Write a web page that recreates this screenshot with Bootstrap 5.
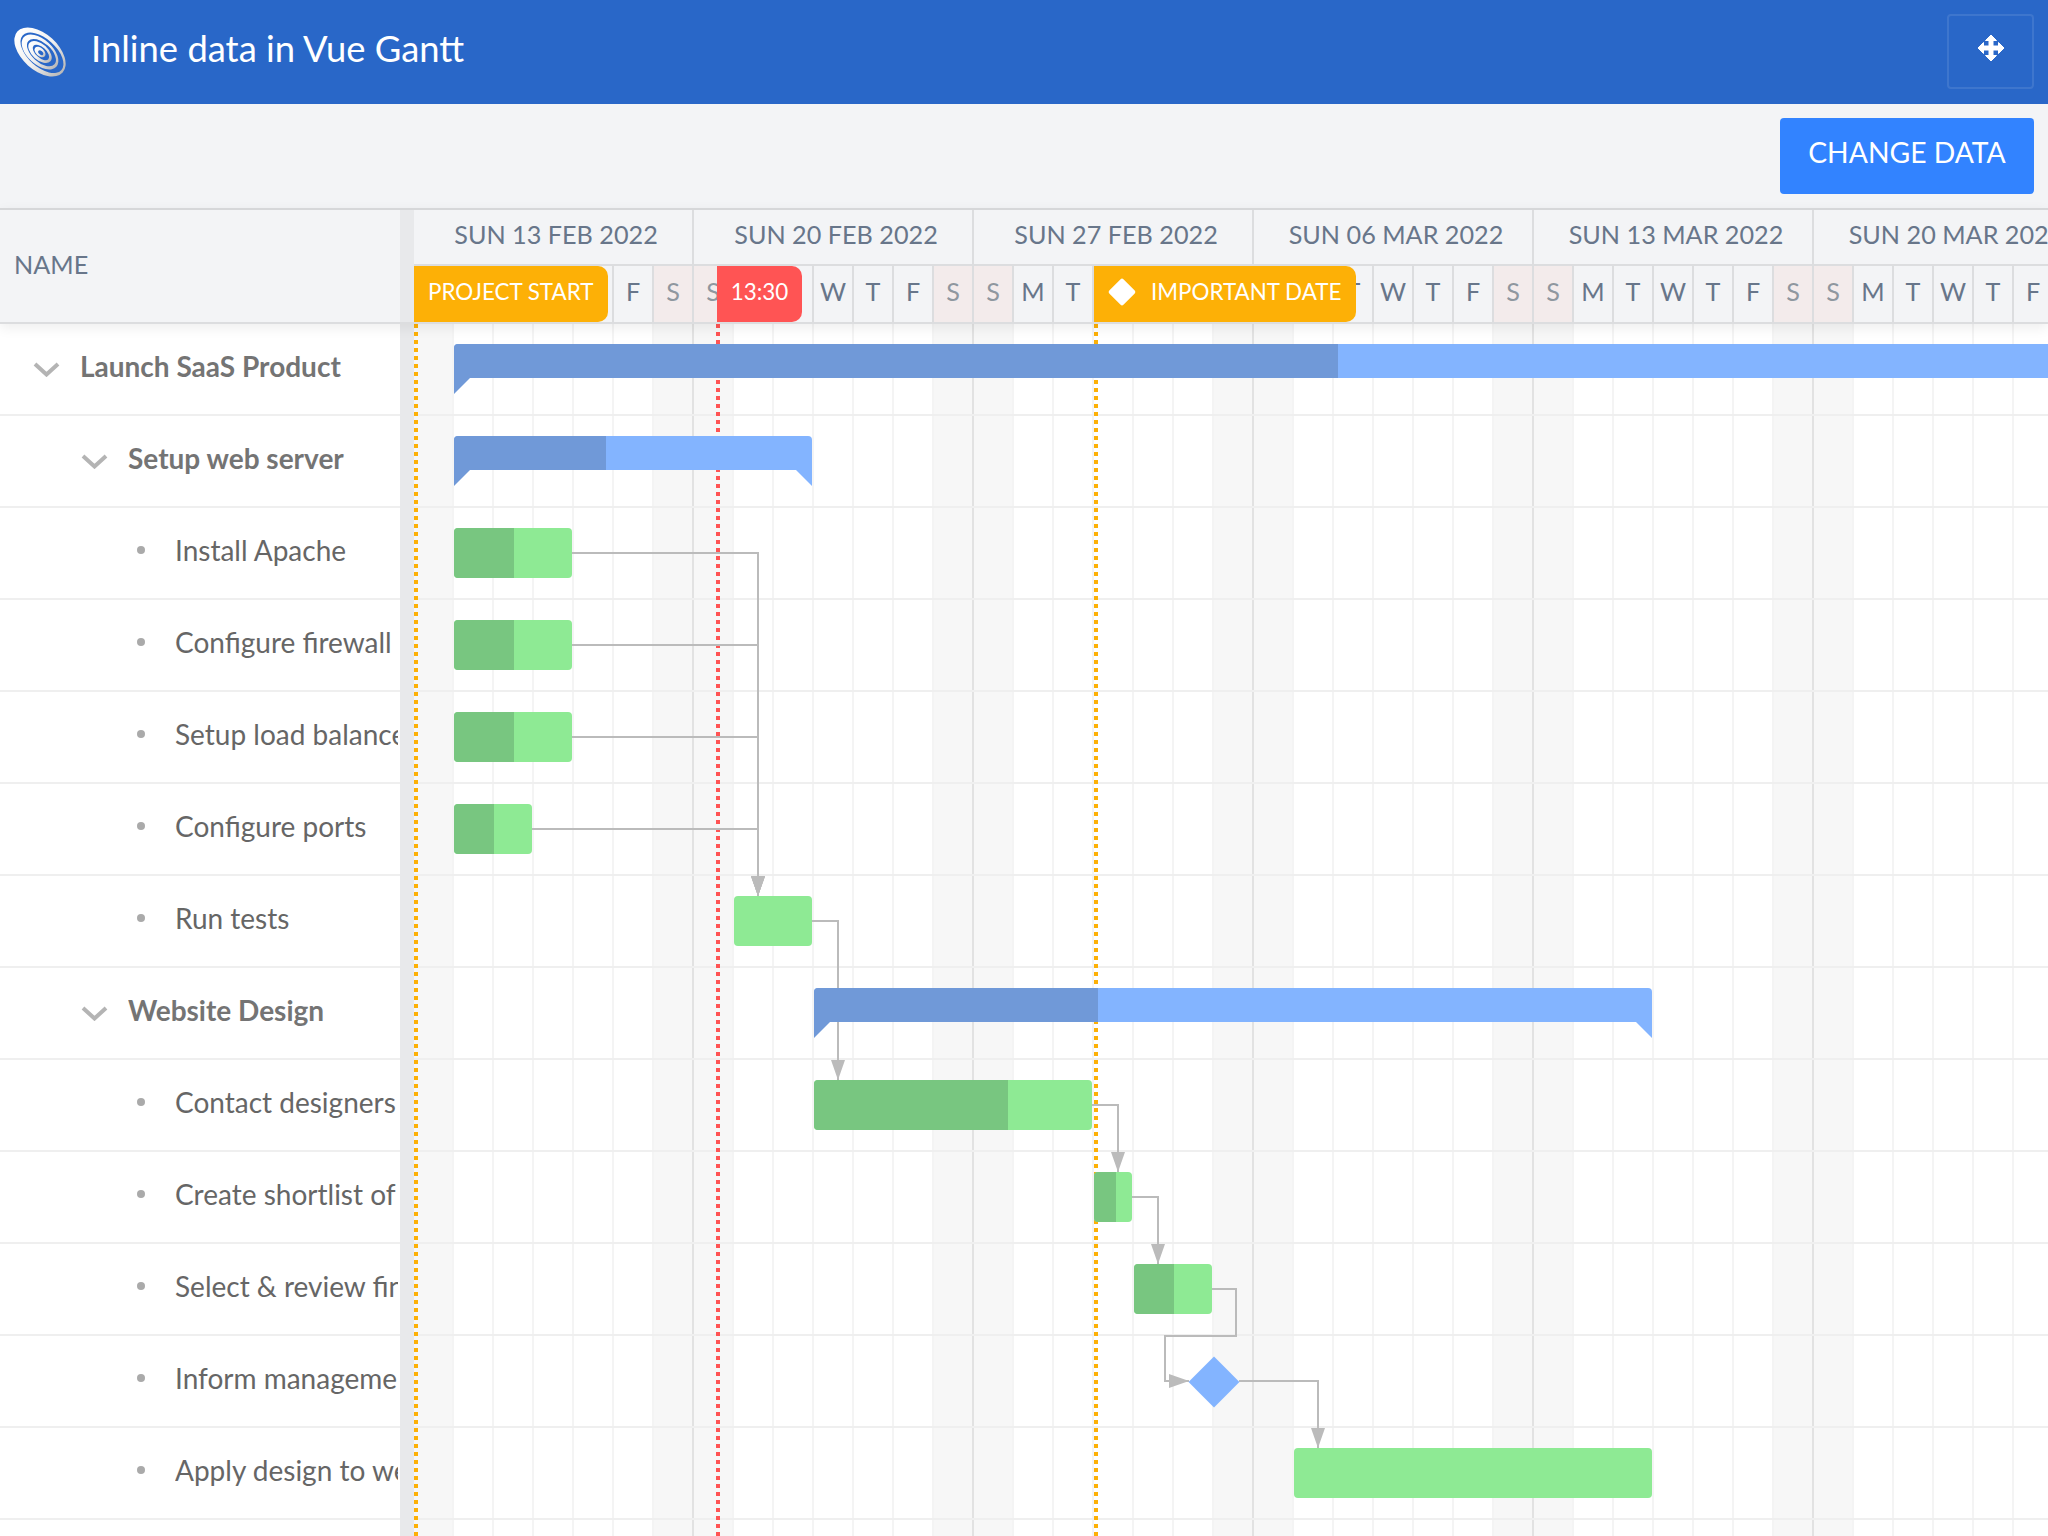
<!DOCTYPE html>
<html lang="en">
<head>
  <meta charset="UTF-8">
  <title>Inline data in Vue Gantt</title>
  <link rel="stylesheet" href="https://cdn.jsdelivr.net/npm/bootstrap@5.3.0/dist/css/bootstrap.min.css">
  <style>
    body { font-family: Lato, "Liberation Sans", sans-serif; height: 1536px; overflow: hidden; background: #fff; }
    .top-bar { height: 104px; background: #2967c8; padding: 0 14px; }
    .top-title { font-size: 36.4px; font-weight: 400; color: #fff; margin-left: 25px; line-height: 1; margin-top: -7px; }
    .move-btn { width: 87px; height: 75px; border: 2px solid rgba(255,255,255,.1); border-radius: 4px; background: transparent; margin-top: -1px; padding: 0 0 8px; }
    .tool-bar { height: 104px; background: #f3f4f6; padding: 14px 14px 0 0; }
    .change-btn { width: 254px; height: 76px; font-size: 28.3px; color: #fff; background: #3283ff; border: 0; border-radius: 4px; padding: 0 0 7px; }
    .change-btn:hover { background: #3283ff; color: #fff; }

    .gantt-head { height: 116px; border-top: 2px solid #d6d7d9; border-bottom: 2px solid #dcdddf; background: #f3f4f6; color: #68768a; box-shadow: 0 4px 12px rgba(0,0,0,.07); position: relative; z-index: 5; }
    .name-cell { width: 400px; padding-left: 14px; font-size: 25.2px; flex: none; padding-bottom: 2px; }
    .split-col { width: 14px; flex: none; background: #e8e9eb; }
    .head-time { width: 1634px; flex: none; }
    .week-row { height: 56px; border-bottom: 2px solid #dcdddf; font-size: 25.2px; }
    .week-cell { width: 280px; flex: none; border-right: 2px solid #dcdddf; padding: 0 0 4px 6px; }
    .day-row { height: 56px; font-size: 25.2px; position: relative; }
    .day-cell { width: 40px; flex: none; border-right: 2px solid #dcdddf; padding-bottom: 4px; }
    .day-cell.off { background: #f3ebeb; color: #8f979f; }
    .flag { position: absolute; top: 0; height: 56px; color: #fff; font-size: 22.4px; border-radius: 0 10px 10px 0; white-space: nowrap; padding-bottom: 5px; }
    .flag-start { left: 0; width: 194px; background: #fdb006; padding-left: 14px; }
    .flag-now { left: 303px; width: 85px; background: #ff5454; justify-content: center; }
    .flag-date { left: 680px; width: 262px; background: #fdb006; padding-left: 18px; gap: 19px; }
    .flag-mark { width: 20px; height: 20px; background: #fff; transform: rotate(45deg); border-radius: 2px; }

    .gantt-body { height: 1212px; }
    .task-list { width: 400px; flex: none; overflow: hidden; }
    .task-row { height: 92px; border-bottom: 2px solid #efefef; white-space: nowrap; font-size: 28px; color: #666; padding: 0 2px 7px 0; }
    .task-row span.task-name { overflow: hidden; flex: 1 1 0; min-width: 0; }
    .task-row.lvl0 { padding-left: 33px; font-weight: 700; color: #747474; }
    .task-row.lvl1 { padding-left: 81px; font-weight: 700; color: #747474; }
    .task-row.lvl2 { padding-left: 137px; }
    .chev { width: 27px; height: 15px; margin-right: 20px; flex: none; margin-top: 8px; }
    .dot { width: 8px; height: 8px; border-radius: 50%; background: #aaa; margin-right: 30px; flex: none; }

    .gantt-canvas { width: 1634px; flex: none; position: relative; overflow: hidden; }
    .col-layer { position: absolute; inset: 0; display: flex; }
    .grid-col { width: 40px; flex: none; border-right: 2px solid #f4f4f4; }
    .grid-col.off { background: #f7f7f7; }
    .grid-col.wk { border-right-color: #e2e2e2; }
    .grid-row { height: 92px; border-bottom: 2px solid #efefef; position: relative; }
    .marker { position: absolute; top: 0; bottom: 0; width: 4px; }
    .marker-gold { background: repeating-linear-gradient(#fdb006 0 4px, transparent 4px 8px); }
    .marker-red { background: repeating-linear-gradient(#ff5454 0 4px, transparent 4px 8px); }
    .dep-lines { position: absolute; left: 0; top: 0; }
    .bar { position: absolute; height: 50px; background: #8eea94; border-radius: 4px; overflow: hidden; }
    .bar-done { height: 100%; background: #78c680; }
    .sum { position: absolute; height: 34px; background: #83b4ff; border-radius: 4px 4px 0 0; }
    .sum-done { height: 100%; background: #7099d8; border-radius: 4px 0 0 0; }
    .sum::before, .sum::after { content: ""; position: absolute; top: 34px; width: 16px; height: 16px; }
    .sum::before { left: 0; background: #7099d8; clip-path: polygon(0 0, 100% 0, 0 100%); }
    .sum::after { right: 0; background: #83b4ff; clip-path: polygon(0 0, 100% 0, 100% 100%); }
    .mile { position: absolute; width: 36px; height: 36px; background: #83b4ff; transform: rotate(45deg); }
  </style>
</head>
<body>

<nav class="navbar top-bar d-flex align-items-center justify-content-between flex-nowrap">
  <div class="d-flex align-items-center">
    <svg width="52" height="52" viewBox="0 0 52 52">
      <defs>
        <linearGradient id="swirl" x1="0" y1="0" x2="1" y2="0">
          <stop offset="0" stop-color="#ffffff"/>
          <stop offset=".55" stop-color="#f0f0f0"/>
          <stop offset="1" stop-color="#b8b8b8"/>
        </linearGradient>
      </defs>
      <g transform="rotate(42 26 26)">
        <ellipse cx="26" cy="26" rx="30.5" ry="18" fill="url(#swirl)"/>
        <ellipse cx="28" cy="25.3" rx="26" ry="14" fill="#2967c8"/>
        <ellipse cx="26" cy="26" rx="22" ry="12.5" fill="url(#swirl)"/>
        <ellipse cx="27.5" cy="25.5" rx="17.5" ry="9.5" fill="#2967c8"/>
        <ellipse cx="26" cy="26" rx="14" ry="8" fill="url(#swirl)"/>
        <ellipse cx="27" cy="25.7" rx="10" ry="5.2" fill="#2967c8"/>
        <ellipse cx="26" cy="26" rx="6.5" ry="4" fill="url(#swirl)"/>
        <ellipse cx="27" cy="26" rx="3" ry="1.8" fill="#2967c8"/>
      </g>
    </svg>
    <span class="top-title">Inline data in Vue Gantt</span>
  </div>
  <button class="move-btn d-flex align-items-center justify-content-center" type="button">
    <svg width="28" height="28" viewBox="0 0 28 28"><path fill="#fff" stroke="#fff" stroke-linejoin="round" d="M14 1 L19.5 6.5 H16 V12 H21.5 V8.5 L27 14 L21.5 19.5 V16 H16 V21.5 H19.5 L14 27 L8.5 21.5 H12 V16 H6.5 V19.5 L1 14 L6.5 8.5 V12 H12 V6.5 H8.5 Z"/></svg>
  </button>
</nav>

<div class="tool-bar d-flex justify-content-end align-items-start">
  <button class="btn change-btn" type="button">CHANGE DATA</button>
</div>

<div class="gantt-head d-flex">
  <div class="name-cell d-flex align-items-center">NAME</div>
  <div class="split-col"></div>
  <div class="head-time overflow-hidden">
    <div class="week-row d-flex" id="weekRow"></div>
    <div class="day-row d-flex" id="dayRow">
      <div class="flag flag-start d-flex align-items-center">PROJECT START</div>
      <div class="flag flag-now d-flex align-items-center">13:30</div>
      <div class="flag flag-date d-flex align-items-center"><span class="flag-mark"></span>IMPORTANT DATE</div>
    </div>
  </div>
</div>

<div class="gantt-body d-flex">
  <div class="task-list" id="taskList"></div>
  <div class="split-col"></div>
  <div class="gantt-canvas" id="canvas">
    <div class="col-layer" id="colLayer"></div>
    <div id="rowLayer" class="position-relative"></div>
    <div class="marker marker-gold" style="left:0"></div>
    <div class="marker marker-red" style="left:302px"></div>
    <div class="marker marker-gold" style="left:680px"></div>
    <svg class="dep-lines" width="1634" height="1212" id="deps"></svg>
  </div>
</div>

<script src="https://cdn.jsdelivr.net/npm/bootstrap@5.3.0/dist/js/bootstrap.bundle.min.js"></script>
<script>
  // all x values are page pixels, 414 is where the timeline starts
  const X0 = 414, ROW = 92, DAY_LETTERS = ["S", "M", "T", "W", "T", "F", "S"];
  const weeks = ["SUN 13 FEB 2022", "SUN 20 FEB 2022", "SUN 27 FEB 2022", "SUN 06 MAR 2022", "SUN 13 MAR 2022", "SUN 20 MAR 2022"];

  const tasks = [
    { name: "Launch SaaS Product", lvl: 0, sum: [454, 2120, 1338] },
    { name: "Setup web server", lvl: 1, sum: [454, 812, 606] },
    { name: "Install Apache", lvl: 2, bar: [454, 572, 514] },
    { name: "Configure firewall", lvl: 2, bar: [454, 572, 514] },
    { name: "Setup load balancer", lvl: 2, bar: [454, 572, 514] },
    { name: "Configure ports", lvl: 2, bar: [454, 532, 494] },
    { name: "Run tests", lvl: 2, bar: [734, 812, 734] },
    { name: "Website Design", lvl: 1, sum: [814, 1652, 1098] },
    { name: "Contact designers", lvl: 2, bar: [814, 1092, 1008] },
    { name: "Create shortlist of designers", lvl: 2, bar: [1094, 1132, 1116] },
    { name: "Select & review final design", lvl: 2, bar: [1134, 1212, 1174] },
    { name: "Inform management about decision", lvl: 2, mile: 1214 },
    { name: "Apply design to web site", lvl: 2, bar: [1294, 1652, 1294] },
    { name: "", lvl: 2 }
  ];

  // polyline points in page pixels, the last point is the arrow tip
  const links = [
    [[572, 553], [758, 553], [758, 896]],
    [[572, 645], [758, 645], [758, 896]],
    [[572, 737], [758, 737], [758, 896]],
    [[532, 829], [758, 829], [758, 896]],
    [[812, 921], [838, 921], [838, 1080]],
    [[1092, 1105], [1118, 1105], [1118, 1172]],
    [[1132, 1197], [1158, 1197], [1158, 1264]],
    [[1212, 1289], [1236, 1289], [1236, 1336], [1165, 1336], [1165, 1381], [1189, 1381]],
    [[1239, 1381], [1318, 1381], [1318, 1448]]
  ];

  let weekHtml = "", dayHtml = "", colHtml = "";
  weeks.forEach(w => weekHtml += `<div class="week-cell d-flex align-items-center justify-content-center">${w}</div>`);
  document.getElementById("weekRow").innerHTML = weekHtml;

  for (let i = 0; i < 42; i++) {
    const wd = i % 7, off = wd === 0 || wd === 6;
    dayHtml += `<div class="day-cell d-flex align-items-center justify-content-center${off ? " off" : ""}">${DAY_LETTERS[wd]}</div>`;
    colHtml += `<div class="grid-col${off ? " off" : ""}${wd === 6 ? " wk" : ""}"></div>`;
  }
  document.getElementById("dayRow").insertAdjacentHTML("afterbegin", dayHtml);
  document.getElementById("colLayer").innerHTML = colHtml;

  const chev = `<svg class="chev" viewBox="0 0 27 15"><polyline points="2,2 13.5,12.5 25,2" fill="none" stroke="#b4b4b4" stroke-width="4"/></svg>`;
  let listHtml = "", rowHtml = "", barHtml = "";
  tasks.forEach((t, i) => {
    const icon = t.lvl < 2 ? chev : (t.name ? `<span class="dot"></span>` : "");
    listHtml += `<div class="task-row lvl${t.lvl} d-flex align-items-center">${icon}<span class="task-name">${t.name.replace("&", "&amp;")}</span></div>`;
    rowHtml += `<div class="grid-row"></div>`;
    const top = i * ROW + 20;
    if (t.bar) {
      const [a, b, done] = t.bar;
      barHtml += `<div class="bar" style="left:${a - X0}px;top:${top}px;width:${b - a}px"><div class="bar-done" style="width:${done - a}px"></div></div>`;
    }
    if (t.sum) {
      const [a, b, done] = t.sum;
      barHtml += `<div class="sum" style="left:${a - X0}px;top:${top}px;width:${b - a}px"><div class="sum-done" style="width:${done - a}px"></div></div>`;
    }
    if (t.mile) {
      barHtml += `<div class="mile" style="left:${t.mile - X0 - 18}px;top:${i * ROW + 28}px"></div>`;
    }
  });
  document.getElementById("taskList").innerHTML = listHtml;
  document.getElementById("rowLayer").innerHTML = rowHtml;
  document.getElementById("canvas").insertAdjacentHTML("beforeend", barHtml);

  // dependency lines, y in page pixels too, canvas starts at 324
  const Y0 = 324;
  let depHtml = "";
  links.forEach(pts => {
    const p = pts.map(([x, y]) => [x - X0, y - Y0]);
    const tip = p[p.length - 1], prev = p[p.length - 2];
    depHtml += `<polyline points="${p.map(q => q.join(",")).join(" ")}" fill="none" stroke="#bbb" stroke-width="2"/>`;
    if (prev[0] === tip[0]) {
      depHtml += `<polygon points="${tip[0]},${tip[1]} ${tip[0] - 7},${tip[1] - 20} ${tip[0] + 7},${tip[1] - 20}" fill="#bbb"/>`;
    } else {
      depHtml += `<polygon points="${tip[0]},${tip[1]} ${tip[0] - 20},${tip[1] - 7} ${tip[0] - 20},${tip[1] + 7}" fill="#bbb"/>`;
    }
  });
  document.getElementById("deps").innerHTML = depHtml;
</script>

</body>
</html>
